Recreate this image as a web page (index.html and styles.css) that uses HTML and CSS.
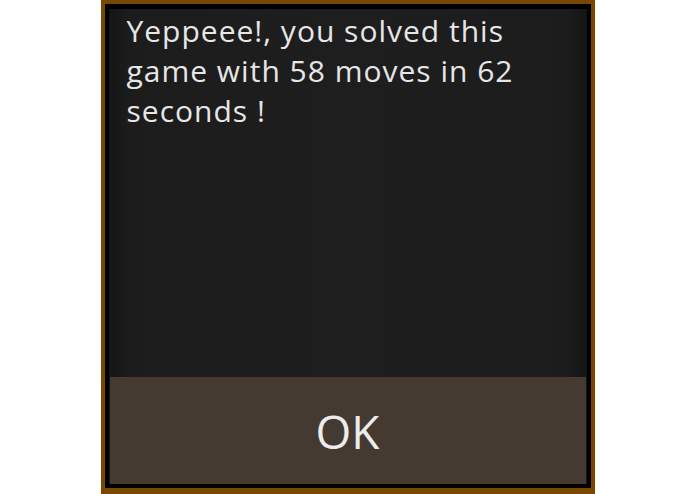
FILE: index.html
```html
<!DOCTYPE html>
<html>
<head>
    <title>Game solved</title>
    <link rel="stylesheet" href="styles.css">
</head>
<body>
    <div class="frame">
        <div class="dialog">
            <div class="message">Yeppeee!, you solved this game with 58 moves in 62 seconds !</div>
            <button class="ok-button">OK</button>
        </div>
    </div>
</body>
</html>
```
FILE: styles.css
```css
html, body {
    margin: 0;
    height: 100%;
    background-color: #ffffff;
}

body {
    font-family: 'Open Sans', 'Noto Sans', sans-serif;
    display: flex;
    justify-content: center;
}

.frame {
    width: 494px;
    height: 494px;
    box-sizing: border-box;
    border: 4px solid #7a4700;
    border-bottom-width: 6px;
    background-color: #000;
    padding: 5px 4px 4px 4px;
}

.dialog {
    height: 100%;
    display: flex;
    flex-direction: column;
    background: linear-gradient(to right, #151515 0%, #1c1c1c 4%, #1e1e1e 50%, #1c1c1c 96%, #151515 100%);
}

.message {
    flex: 1;
    color: #e6e6e6;
    font-size: 30px;
    letter-spacing: 1px;
    line-height: 40px;
    padding: 2px 40px 0 18px;
}

.ok-button {
    height: 107px;
    margin: 0 1px;
    border: none;
    background-color: #443a31;
    color: #ececec;
    font-family: 'Open Sans', 'Noto Sans', sans-serif;
    font-size: 46px;
    padding: 0;
    cursor: pointer;
}
```
